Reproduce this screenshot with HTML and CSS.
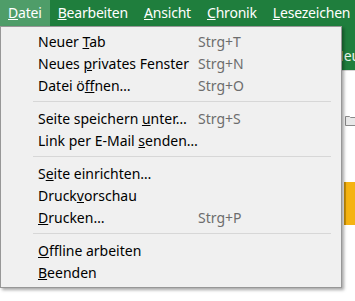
FILE: index.html
```html
<!doctype html>
<html lang="de">
    <head>
        <meta charset="UTF-8" />
        <title>Datei-Menü</title>
        <link rel="stylesheet" href="styles.css">
    </head>
    <body>
        <nav class="menubar">
            <span class="menubar-item active"><u>D</u>atei</span>
            <span class="menubar-item"><u>B</u>earbeiten</span>
            <span class="menubar-item"><u>A</u>nsicht</span>
            <span class="menubar-item"><u>C</u>hronik</span>
            <span class="menubar-item"><u>L</u>esezeichen</span>
        </nav>

        <section class="page">
            <div class="tabbar">Neuer Tab</div>
            <div class="toolbar">
                <svg class="folder" viewBox="0 0 12 12" width="12" height="12">
                    <path d="M0.5 2.5h4l1 1h6v8h-11z" fill="#e8e8e8" stroke="#8a8a8a" />
                </svg>
            </div>
            <div class="banner"></div>
        </section>

        <ul class="dropdown">
            <li class="entry"><span class="label">Neuer <u>T</u>ab</span><span class="key">Strg+T</span></li>
            <li class="entry"><span class="label">Neues <u>p</u>rivates Fenster</span><span class="key">Strg+N</span></li>
            <li class="entry"><span class="label">Datei ö<u>f</u>fnen…</span><span class="key">Strg+O</span></li>
            <li class="sep"></li>
            <li class="entry"><span class="label">Seite speichern <u>u</u>nter…</span><span class="key">Strg+S</span></li>
            <li class="entry"><span class="label">Link per E-Mail <u>s</u>enden…</span></li>
            <li class="sep"></li>
            <li class="entry"><span class="label">S<u>e</u>ite einrichten…</span></li>
            <li class="entry"><span class="label">Druck<u>v</u>orschau</span></li>
            <li class="entry"><span class="label"><u>D</u>rucken…</span><span class="key">Strg+P</span></li>
            <li class="sep"></li>
            <li class="entry"><span class="label"><u>O</u>ffline arbeiten</span></li>
            <li class="entry"><span class="label"><u>B</u>eenden</span></li>
        </ul>
    </body>
</html>
```

FILE: styles.css
```css
body,
html {
    margin: 0;
    padding: 0;
    background: #fff;
    font-family: "Noto Sans", "Open Sans", sans-serif;
    font-size: 14px;
    overflow: hidden;
}

.menubar {
    display: flex;
    height: 27px;
    background-color: #1f7e3d;
    color: #fff;
    white-space: nowrap;
    overflow: hidden;
    letter-spacing: -0.2px;
}

.menubar-item {
    padding: 0 8px;
    line-height: 26px;
}

.menubar-item.active {
    background-color: #4f9d69;
}

.page {
    display: flex;
    flex-direction: column;
}

.tabbar {
    height: 43px;
    box-sizing: border-box;
    padding: 19px 0 0 333px;
    background-color: #1f7e3d;
    color: #e9f5ec;
    line-height: 20px;
    white-space: nowrap;
    overflow: hidden;
}

.toolbar {
    height: 70px;
    box-sizing: border-box;
    border-top: 1px solid #d6d6d6;
    padding: 43px 0 0 345px;
}

.folder {
    display: block;
}

.banner {
    margin-top: 42px;
    margin-left: 344px;
    height: 43px;
    background-color: #f5b312;
    border-left: 2px solid #c98f08;
}

.dropdown {
    position: absolute;
    top: 26px;
    left: 0;
    width: 336px;
    margin: 0;
    padding: 3px 2px 4px 2px;
    list-style: none;
    background-color: #f0f0f0;
    border: 1px solid #979797;
    box-shadow: 2px 2px 3px rgba(0, 0, 0, 0.35);
}

.entry {
    display: flex;
    height: 22px;
    align-items: center;
    padding-left: 35px;
    color: #000;
    white-space: nowrap;
}

.label {
    width: 160px;
}

.key {
    color: #6d6d6d;
}

.sep {
    height: 11px;
    display: flex;
    align-items: center;
    padding-left: 30px;
    padding-right: 8px;
}

.sep::after {
    content: "";
    flex: 1;
    border-top: 1px solid #d7d7d7;
}
```
